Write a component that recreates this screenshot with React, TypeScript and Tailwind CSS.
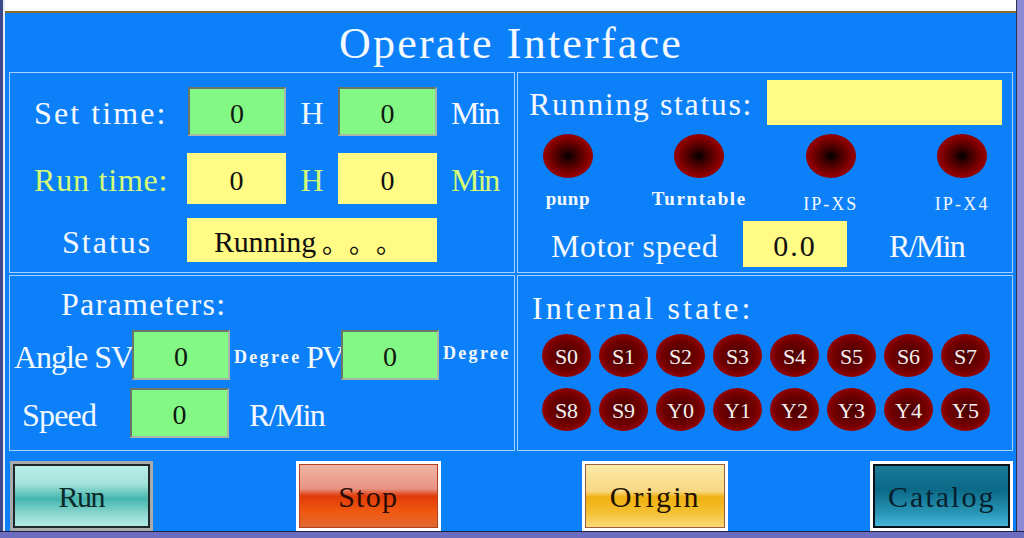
import React from "react";

const LBL = "leading-none whitespace-nowrap text-[32px] text-[#f4f8ff] pt-[3px]";
const GREEN =
  "flex items-center justify-center bg-[#84f884] border-2 border-t-[#6a766a] border-l-[#6a766a] border-b-[#a8b8a8] border-r-[#a8b8a8] text-[28px] leading-none text-[#101810] pt-[4px]";
const YEL = "flex items-center bg-[#fffb84] text-[#101010] leading-none";
const PANEL = "border border-[#a6d2ff]";

function Lamp({ label }: { label: string }) {
  return (
    <div className="w-[49px] h-[43px] rounded-[50%] bg-[radial-gradient(#4a0000_0%,#700000_50%,#c40808_100%)] flex items-center justify-center text-[22px] leading-none text-[#f4f0f0] pt-[2px]">
      {label}
    </div>
  );
}

function Indicator({ label, mt, cls }: { label: string; mt: string; cls: string }) {
  return (
    <div className="w-[100px] h-[80px] flex flex-col items-center">
      <div className="w-[50px] h-[44px] rounded-[50%] bg-[radial-gradient(#000000_0%,#3a0000_22%,#8a0000_60%,#ac0000_100%)]" />
      <div className={`${mt} ${cls} whitespace-nowrap leading-none text-[#f4f8ff]`}>{label}</div>
    </div>
  );
}

export default function App() {
  const row1 = ["S0", "S1", "S2", "S3", "S4", "S5", "S6", "S7"];
  const row2 = ["S8", "S9", "Y0", "Y1", "Y2", "Y3", "Y4", "Y5"];
  return (
    <div className="w-[1024px] h-[538px] overflow-hidden flex flex-col bg-[#6c6cc0] font-['Liberation_Serif',serif]">
      <div className="flex h-[531px]">
        <div className="w-[3px] bg-[#3c4a8c]" />
        <div className="w-[2px] bg-[#e8ecf8]" />
        <div className="w-[1011px] flex flex-col">
          <div className="h-[11px] bg-white" />
          <div className="h-[2px] bg-[#8a6a30]" />
          <div className="flex-1 bg-[#0b80f8] flex flex-col pl-[4px] pr-[3px]">
            {/* Title */}
            <div className="h-[59px] flex items-center justify-center">
              <span className="text-[44px] leading-none tracking-[2.2px] text-[#f4f8ff] pt-[2px]">
                Operate Interface
              </span>
            </div>

            {/* Panels */}
            <div className="flex flex-col gap-[2px]">
              <div className="flex gap-[2px] h-[201px]">
                {/* Top-left */}
                <div className={`${PANEL} w-[506px] flex flex-col`}>
                  <div className="flex items-center h-[49px] mt-[14px]">
                    <span className={`${LBL} w-[178px] pl-[24px] tracking-[2.1px]`}>Set time:</span>
                    <div className={`${GREEN} w-[98px] h-[49px]`}>0</div>
                    <span className={`${LBL} w-[52px] text-center`}>H</span>
                    <div className={`${GREEN} w-[99px] h-[49px]`}>0</div>
                    <span className={`${LBL} ml-[14px] tracking-[-2px]`}>Min</span>
                  </div>
                  <div className="flex items-center h-[51px] mt-[17px]">
                    <span className={`${LBL} w-[177px] pl-[24px] tracking-[0.8px] !text-[#d4fc78]`}>Run time:</span>
                    <div className={`${YEL} justify-center w-[99px] h-[51px] text-[28px] pt-[4px]`}>0</div>
                    <span className={`${LBL} w-[52px] text-center !text-[#d4fc78]`}>H</span>
                    <div className={`${YEL} justify-center w-[99px] h-[51px] text-[28px] pt-[4px]`}>0</div>
                    <span className={`${LBL} ml-[14px] tracking-[-2px] !text-[#d4fc78]`}>Min</span>
                  </div>
                  <div className="flex items-center h-[44px] mt-[14px]">
                    <span className={`${LBL} w-[177px] pl-[52px] tracking-[2px]`}>Status</span>
                    <div className={`${YEL} w-[250px] h-[44px] pl-[27px] text-[30px] pt-[4px]`}>
                      <span className="tracking-[-0.2px]">Running</span>
                      <span className="ml-[6px] w-[27px] font-['Noto_Sans_CJK_SC',sans-serif] text-[26px]">。</span>
                      <span className="w-[27px] font-['Noto_Sans_CJK_SC',sans-serif] text-[26px]">。</span>
                      <span className="w-[27px] font-['Noto_Sans_CJK_SC',sans-serif] text-[26px]">。</span>
                    </div>
                  </div>
                </div>

                {/* Top-right */}
                <div className={`${PANEL} w-[496px] flex flex-col`}>
                  <div className="flex items-center h-[45px] mt-[7px]">
                    <span className={`${LBL} w-[249px] pl-[11px] tracking-[1.6px]`}>Running status:</span>
                    <div className={`${YEL} w-[235px] h-[45px]`} />
                  </div>
                  <div className="flex items-start gap-[31.7px] mt-[9px]">
                    <Indicator label="punp" mt="mt-[11px]" cls="text-[19px] font-bold tracking-[0.5px]" />
                    <Indicator label="Turntable" mt="mt-[11px]" cls="text-[19px] font-bold tracking-[1.6px]" />
                    <Indicator label="IP-XS" mt="mt-[17px]" cls="text-[18px] tracking-[2px]" />
                    <Indicator label="IP-X4" mt="mt-[17px]" cls="text-[18px] tracking-[2.2px]" />
                  </div>
                  <div className="flex items-center h-[46px] mt-[7px]">
                    <span className={`${LBL} w-[225px] pl-[33px] tracking-[0.6px]`}>Motor speed</span>
                    <div className={`${YEL} justify-center w-[104px] h-[46px] text-[30px] tracking-[2px] pt-[4px]`}>0.0</div>
                    <span className={`${LBL} ml-[42px] tracking-[-1.7px]`}>R/Min</span>
                  </div>
                </div>
              </div>

              <div className="flex gap-[2px] h-[176px]">
                {/* Bottom-left */}
                <div className={`${PANEL} w-[506px] flex flex-col`}>
                  <div className="flex items-center h-[30px] mt-[11px]">
                    <span className={`${LBL} pl-[51px] tracking-[1.3px]`}>Parameters:</span>
                  </div>
                  <div className="flex items-center h-[50px] mt-[13px]">
                    <span className={`${LBL} w-[122px] pl-[4px] text-[30px] tracking-[-1px]`}>Angle SV</span>
                    <div className={`${GREEN} w-[98px] h-[50px]`}>0</div>
                    <span className="w-[76px] pl-[4px] text-[18px] font-bold tracking-[2.3px] leading-none text-[#f4f8ff] pt-[3px] whitespace-nowrap">
                      Degree
                    </span>
                    <span className={`${LBL} w-[35px] text-[30px] tracking-[-2px]`}>PV</span>
                    <div className={`${GREEN} w-[98px] h-[50px]`}>0</div>
                    <span className="pl-[4px] text-[18px] font-bold tracking-[2.3px] leading-none text-[#f4f8ff] -mt-[4px] whitespace-nowrap">
                      Degree
                    </span>
                  </div>
                  <div className="flex items-center h-[50px] mt-[8px]">
                    <span className={`${LBL} w-[120px] pl-[12px] tracking-[-0.8px]`}>Speed</span>
                    <div className={`${GREEN} w-[99px] h-[50px]`}>0</div>
                    <span className={`${LBL} ml-[20px] tracking-[-1.7px]`}>R/Min</span>
                  </div>
                </div>

                {/* Bottom-right */}
                <div className={`${PANEL} w-[496px] flex flex-col`}>
                  <div className="flex items-center h-[30px] mt-[15px]">
                    <span className={`${LBL} pl-[14px] tracking-[3.1px]`}>Internal state:</span>
                  </div>
                  <div className="flex gap-[8px] pl-[24px] mt-[13px]">
                    {row1.map((l) => (
                      <Lamp key={l} label={l} />
                    ))}
                  </div>
                  <div className="flex gap-[8px] pl-[24px] mt-[11px]">
                    {row2.map((l) => (
                      <Lamp key={l} label={l} />
                    ))}
                  </div>
                </div>
              </div>
            </div>

            {/* Buttons */}
            <div className="flex h-[70px] mt-[10px]">
              <div className="ml-[1px] w-[143px] h-[70px] bg-[#a8acac] p-[3px]">
                <div className="w-full h-full border-2 border-[#1e2828] bg-[linear-gradient(to_bottom,#bceee8_0%,#a2e2da_30%,#44b6ae_55%,#8ed8d0_80%,#b4eae6_100%)] flex items-center justify-center">
                  <span className="text-[30px] leading-none tracking-[-1.5px] text-[#0c2a2a] pt-[2px]">Run</span>
                </div>
              </div>
              <div className="ml-[143px] w-[146px] h-[70px] bg-white p-[3px]">
                <div className="w-full h-full border border-[#b04020] bg-[linear-gradient(to_bottom,#f0b4a4_0%,#e89484_38%,#e03a08_50%,#f05810_75%,#e06830_100%)] flex items-center justify-center">
                  <span className="text-[30px] leading-none tracking-[1.3px] text-[#2a0c06] pt-[2px]">Stop</span>
                </div>
              </div>
              <div className="ml-[141px] w-[147px] h-[70px] bg-white p-[3px]">
                <div className="w-full h-full border border-[#a06040] bg-[linear-gradient(to_bottom,#fbeaa8_0%,#f8d884_42%,#f0b010_52%,#f4c030_75%,#f8d878_100%)] flex items-center justify-center">
                  <span className="text-[30px] leading-none tracking-[2.1px] text-[#201000] pt-[2px]">Origin</span>
                </div>
              </div>
              <div className="ml-[142px] w-[143px] h-[70px] bg-white p-[3px]">
                <div className="w-full h-full border-2 border-[#061018] bg-[linear-gradient(to_bottom,#1a7a98_0%,#0c6a88_40%,#2a98b8_80%,#48b8d8_100%)] flex items-center justify-center">
                  <span className="text-[30px] leading-none tracking-[2px] text-[#06202c] pt-[2px]">Catalog</span>
                </div>
              </div>
            </div>
          </div>
        </div>
        <div className="w-[1px] bg-[#303050]" />
        <div className="flex-1 bg-[#8c88d8]" />
      </div>
      <div className="h-[1px] bg-[#202040]" />
      <div className="flex-1 bg-[#6c6cc0]" />
    </div>
  );
}
